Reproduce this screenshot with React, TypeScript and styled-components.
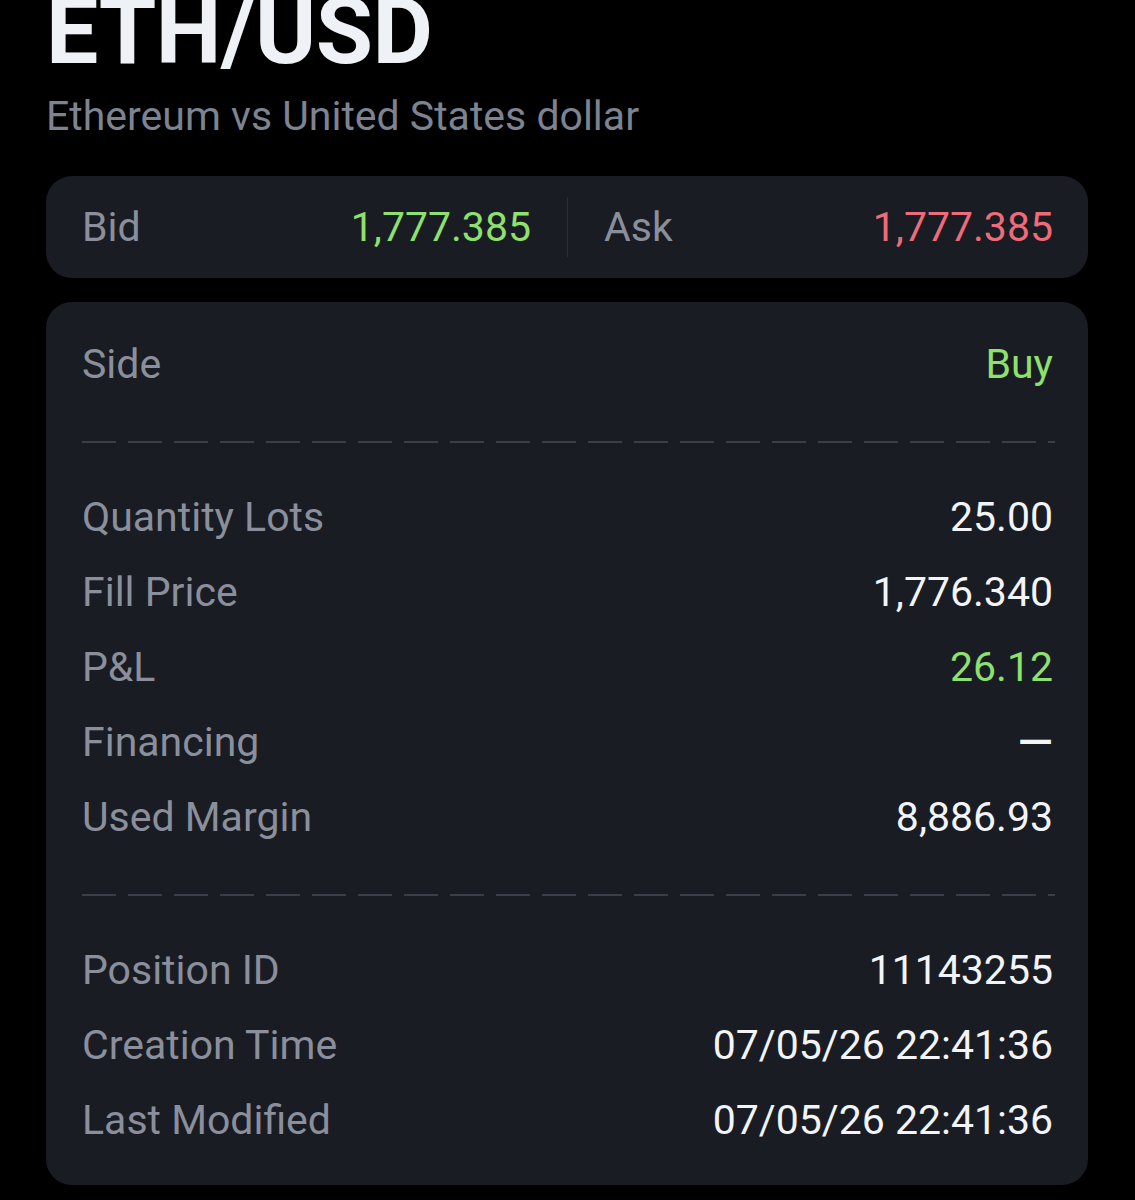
import React from "react";
import styled, { createGlobalStyle } from "styled-components";

const GlobalStyle = createGlobalStyle`
  html, body {
    margin: 0;
    padding: 0;
    background: #000;
  }
  body {
    font-family: Roboto, "Noto Sans", "Liberation Sans", sans-serif;
    -webkit-font-smoothing: antialiased;
  }
`;

const Page = styled.div`
  padding: 0 47px 0 46px;
  overflow: hidden;
  height: 1200px;
  box-sizing: border-box;
`;

const Title = styled.h1`
  margin: -15px 0 0;
  font-size: 93px;
  line-height: 93px;
  font-weight: 700;
  color: #eef2f6;
  letter-spacing: -0.5px;
`;

const Subtitle = styled.div`
  margin-top: 14px;
  font-size: 41px;
  line-height: 48px;
  color: #7d8391;
`;

const Card = styled.div`
  background: #1a1c24;
  border-radius: 26px;
`;

const QuoteCard = styled(Card)`
  margin-top: 36px;
  height: 102px;
  padding: 0 35px 0 36px;
  display: grid;
  grid-template-columns: 1fr auto 1fr;
  column-gap: 36px;
  align-items: center;
`;

const QuoteSide = styled.div`
  display: flex;
  justify-content: space-between;
  align-items: center;
`;

const VDivider = styled.div`
  width: 1px;
  height: 60px;
  background: #2c2f39;
`;

const DetailCard = styled(Card)`
  margin-top: 24px;
  padding: 24px 35px 28px 36px;
`;

const Row = styled.div`
  height: 75px;
  display: flex;
  justify-content: space-between;
  align-items: center;
`;

const Label = styled.span`
  font-size: 41px;
  color: #8a8f9b;
`;

const Value = styled.span<{ $tone?: "up" | "down"; $empty?: boolean }>`
  font-size: ${(p) => (p.$empty ? "46px" : "41px")};
  font-weight: ${(p) => (p.$empty ? 500 : 400)};
  color: ${(p) =>
    p.$tone === "up" ? "#8fe06c" : p.$tone === "down" ? "#ee6b79" : "#f2f4f7"};
`;

const Dashes = styled.div`
  height: 2px;
  margin: 40px -2px 36px 0;
  background: repeating-linear-gradient(
    to right,
    #3b3e48 0 34px,
    transparent 34px 46px
  );
`;

type Item = { label: string; value: string; tone?: "up" | "down" };

const trade: Item[] = [
  { label: "Quantity Lots", value: "25.00" },
  { label: "Fill Price", value: "1,776.340" },
  { label: "P&L", value: "26.12", tone: "up" },
  { label: "Financing", value: "—" },
  { label: "Used Margin", value: "8,886.93" },
];

const meta: Item[] = [
  { label: "Position ID", value: "11143255" },
  { label: "Creation Time", value: "07/05/26 22:41:36" },
  { label: "Last Modified", value: "07/05/26 22:41:36" },
];

function Rows({ items }: { items: Item[] }) {
  return (
    <>
      {items.map((item) => (
        <Row key={item.label}>
          <Label>{item.label}</Label>
          <Value $tone={item.tone} $empty={item.value === "—"}>
            {item.value}
          </Value>
        </Row>
      ))}
    </>
  );
}

export default function App() {
  return (
    <Page>
      <GlobalStyle />
      <Title>ETH/USD</Title>
      <Subtitle>Ethereum vs United States dollar</Subtitle>

      <QuoteCard>
        <QuoteSide>
          <Label>Bid</Label>
          <Value $tone="up">1,777.385</Value>
        </QuoteSide>
        <VDivider />
        <QuoteSide>
          <Label>Ask</Label>
          <Value $tone="down">1,777.385</Value>
        </QuoteSide>
      </QuoteCard>

      <DetailCard>
        <Row>
          <Label>Side</Label>
          <Value $tone="up">Buy</Value>
        </Row>
        <Dashes />
        <Rows items={trade} />
        <Dashes />
        <Rows items={meta} />
      </DetailCard>
    </Page>
  );
}
